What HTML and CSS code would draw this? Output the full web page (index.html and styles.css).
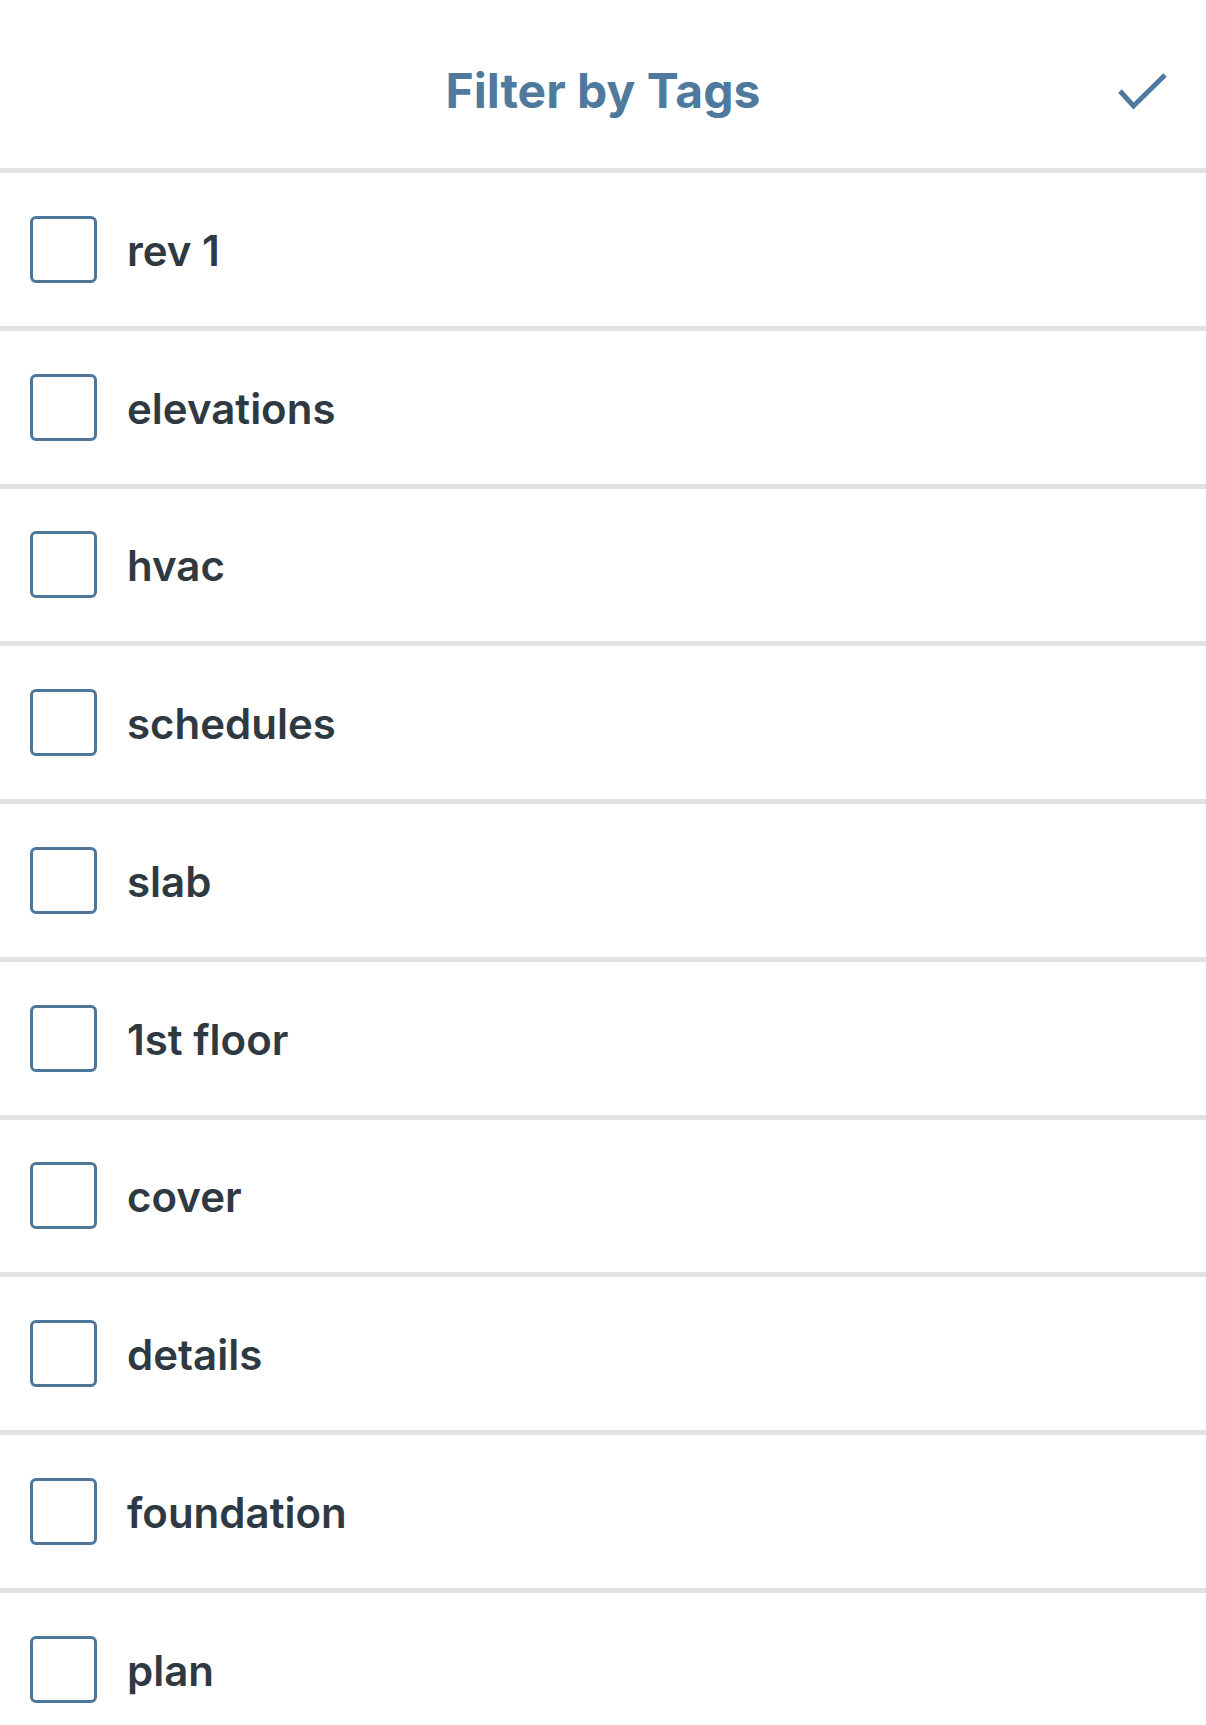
FILE: index.html
```html
<!DOCTYPE html>
<html lang="en">
<head>
<meta charset="utf-8">
<title>Filter by Tags</title>
<link rel="stylesheet" href="styles.css">
</head>
<body>
<div class="screen">
  <header class="header">
    <h1 class="title">Filter by Tags</h1>
    <button class="done" aria-label="Done">
      <svg viewBox="0 0 50 40" width="50" height="40"><path d="M2 19 L15.5 34 L47 3" fill="none" stroke="#4f7a9e" stroke-width="5"/></svg>
    </button>
  </header>
  <ul class="list">
    <li class="row"><span class="box"></span><span class="label">rev 1</span></li>
    <li class="row"><span class="box"></span><span class="label">elevations</span></li>
    <li class="row"><span class="box"></span><span class="label">hvac</span></li>
    <li class="row"><span class="box"></span><span class="label">schedules</span></li>
    <li class="row"><span class="box"></span><span class="label">slab</span></li>
    <li class="row"><span class="box"></span><span class="label">1st floor</span></li>
    <li class="row"><span class="box"></span><span class="label">cover</span></li>
    <li class="row"><span class="box"></span><span class="label">details</span></li>
    <li class="row"><span class="box"></span><span class="label">foundation</span></li>
    <li class="row"><span class="box"></span><span class="label">plan</span></li>
  </ul>
</div>
</body>
</html>
```
FILE: styles.css
```css
* { box-sizing: border-box; }
html, body { margin: 0; padding: 0; background: #fff; }
body { font-family: Inter, "Noto Sans", sans-serif; }
.screen { width: 1206px; height: 1725px; overflow: hidden; }
.header {
  height: 173px;
  border-bottom: 5px solid #e1e2e4;
  display: flex;
  align-items: center;
  justify-content: center;
  position: relative;
}
.title {
  margin: 0;
  font-size: 48px;
  font-weight: 700;
  color: #4f7a9e;
  letter-spacing: 0;
  padding-top: 12px;
}
.done {
  position: absolute;
  right: 38px;
  top: 72px;
  border: 0;
  background: none;
  padding: 0;
  width: 50px;
  height: 40px;
}
.done svg { display: block; }
.list { list-style: none; margin: 0; padding: 0; }
.row {
  height: 157.75px;
  border-bottom: 5px solid #e1e2e4;
  display: flex;
  align-items: center;
  padding-left: 30px;
}
.box {
  width: 67px;
  height: 67px;
  border: 3px solid #4e7699;
  border-radius: 6px;
  flex: none;
}
.label {
  margin-left: 30px;
  font-size: 42px;
  font-weight: 600;
  color: #2f3942;
  padding-top: 2px;
}
```
